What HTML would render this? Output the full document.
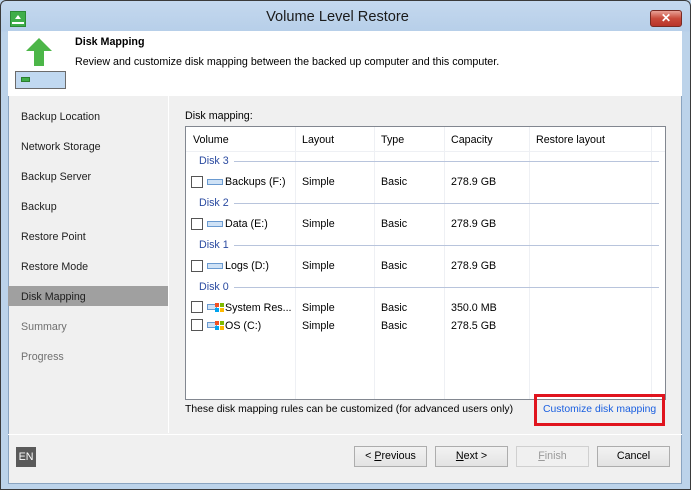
<!DOCTYPE html>
<html><head><style>
*{margin:0;padding:0;box-sizing:border-box}
body{width:691px;height:490px;background:#bcd3ea;font-family:"Liberation Sans",sans-serif;font-size:10.7px;color:#000;position:relative;overflow:hidden}
.abs{position:absolute}
.frame{left:0;top:0;width:691px;height:490px;border:1px solid #3a3a3a;border-radius:6px 6px 0 0;background:linear-gradient(#c4d8ee,#b7cfe9 30px,#bcd3ea 31px)}
.client{left:8px;top:31px;width:674px;height:453px;background:#f0f0f0;border:1px solid #8aa4c0}
.hdr{left:8px;top:31px;width:674px;height:65px;background:#fff}
.nav{left:21px;color:#1e1e1e}
.btn{top:446px;height:21px;border:1px solid #adadad;background:linear-gradient(#f2f2f2,#e3e3e3);text-align:center;line-height:19px}
.th{top:134px}
.disk{color:#2a4aa0}
.line{height:1px;background:#b8c4dc}
.cb{width:12px;height:12px;border:1px solid #555;background:#fff}
</style></head><body>
<div class="abs frame"></div>
<div class="abs" style="left:10px;top:11px;width:16px;height:16px;background:#3fae49;border:1px solid #2c8a35"></div>
<div class="abs" style="left:15px;top:13px;width:6px;height:6px;border-left:3px solid transparent;border-right:3px solid transparent;border-bottom:4px solid #fff"></div>
<div class="abs" style="left:12px;top:22px;width:12px;height:2px;background:#fff"></div>
<div class="abs" style="left:0;top:9px;width:675px;text-align:center;font-size:14.6px;color:#1a1a1a">Volume Level Restore</div>
<div class="abs" style="left:650px;top:10px;width:32px;height:17px;border:1px solid #7a2a22;border-radius:3px;background:linear-gradient(#e8a196,#c94a3a 50%,#b8342a);color:#fff;text-align:center;font-weight:bold;font-size:12px;line-height:15px">✕</div>
<div class="abs client"></div>
<div class="abs hdr"></div>
<svg class="abs" style="left:24px;top:37px" width="30" height="30"><polygon points="15,1 28,14 20,14 20,29 10,29 10,14 2,14" fill="#4cb648"/></svg>
<div class="abs" style="left:15px;top:71px;width:51px;height:18px;border:1px solid #6b6b6b;background:#c0d8f0"></div>
<div class="abs" style="left:21px;top:77px;width:9px;height:5px;background:#3fae49;border:1px solid #2b7e2e"></div>
<div class="abs" style="left:75px;top:36px;font-weight:bold">Disk Mapping</div>
<div class="abs" style="left:75px;top:56px">Review and customize disk mapping between the backed up computer and this computer.</div>
<div class="abs" style="left:168px;top:96px;width:1px;height:337px;background:#fff"></div>
<div class="abs" style="left:8px;top:434px;width:674px;height:1px;background:#fff"></div>
<div class="abs nav" style="top:111px">Backup Location</div>
<div class="abs nav" style="top:141px">Network Storage</div>
<div class="abs nav" style="top:171px">Backup Server</div>
<div class="abs nav" style="top:201px">Backup</div>
<div class="abs nav" style="top:231px">Restore Point</div>
<div class="abs nav" style="top:261px">Restore Mode</div>
<div class="abs" style="left:8px;top:286px;width:160px;height:20px;background:#a0a0a0"></div>
<div class="abs nav" style="top:291px">Disk Mapping</div>
<div class="abs nav" style="top:321px;color:#707070">Summary</div>
<div class="abs nav" style="top:351px;color:#707070">Progress</div>
<div class="abs" style="left:16px;top:447px;width:20px;height:20px;background:#5a5a5a;color:#fff;line-height:20px;text-align:center">EN</div>
<div class="abs" style="left:185px;top:110px">Disk mapping:</div>
<div class="abs" style="left:185px;top:126px;width:481px;height:274px;background:#fff;border:1px solid #828790"></div>
<div class="abs" style="left:295px;top:127px;width:1px;height:272px;background:#eef0f4"></div>
<div class="abs" style="left:374px;top:127px;width:1px;height:272px;background:#eef0f4"></div>
<div class="abs" style="left:444px;top:127px;width:1px;height:272px;background:#eef0f4"></div>
<div class="abs" style="left:529px;top:127px;width:1px;height:272px;background:#eef0f4"></div>
<div class="abs" style="left:651px;top:127px;width:1px;height:272px;background:#eef0f4"></div>
<div class="abs" style="left:186px;top:151px;width:479px;height:1px;background:#eef0f4"></div>
<div class="abs th" style="left:193px">Volume</div>
<div class="abs th" style="left:302px">Layout</div>
<div class="abs th" style="left:381px">Type</div>
<div class="abs th" style="left:451px">Capacity</div>
<div class="abs th" style="left:536px">Restore layout</div>

<div class="abs disk" style="left:199px;top:155px">Disk 3</div><div class="abs line" style="left:234px;top:161px;width:425px"></div>
<div class="abs disk" style="left:199px;top:197px">Disk 2</div><div class="abs line" style="left:234px;top:203px;width:425px"></div>
<div class="abs disk" style="left:199px;top:239px">Disk 1</div><div class="abs line" style="left:234px;top:245px;width:425px"></div>
<div class="abs disk" style="left:199px;top:281px">Disk 0</div><div class="abs line" style="left:234px;top:287px;width:425px"></div>

<div class="abs cb" style="left:191px;top:176px"></div><div class="abs" style="left:207px;top:179px;width:16px;height:6px;border:1px solid #6a9ad0;background:#cfe2f6"></div><div class="abs" style="left:225px;top:176px">Backups (F:)</div>
<div class="abs cb" style="left:191px;top:218px"></div><div class="abs" style="left:207px;top:221px;width:16px;height:6px;border:1px solid #6a9ad0;background:#cfe2f6"></div><div class="abs" style="left:225px;top:218px">Data (E:)</div>
<div class="abs cb" style="left:191px;top:260px"></div><div class="abs" style="left:207px;top:263px;width:16px;height:6px;border:1px solid #6a9ad0;background:#cfe2f6"></div><div class="abs" style="left:225px;top:260px">Logs (D:)</div>
<div class="abs cb" style="left:191px;top:301px"></div><div class="abs" style="left:207px;top:304px;width:10px;height:6px;border:1px solid #6a9ad0;background:#cfe2f6"></div><svg class="abs" style="left:215px;top:303px" width="9" height="9"><rect x="0" y="0" width="4" height="4" fill="#f25022"/><rect x="5" y="0" width="4" height="4" fill="#7fba00"/><rect x="0" y="5" width="4" height="4" fill="#00a4ef"/><rect x="5" y="5" width="4" height="4" fill="#ffb900"/></svg><div class="abs" style="left:225px;top:302px">System Res...</div>
<div class="abs cb" style="left:191px;top:319px"></div><div class="abs" style="left:207px;top:322px;width:10px;height:6px;border:1px solid #6a9ad0;background:#cfe2f6"></div><svg class="abs" style="left:215px;top:321px" width="9" height="9"><rect x="0" y="0" width="4" height="4" fill="#f25022"/><rect x="5" y="0" width="4" height="4" fill="#7fba00"/><rect x="0" y="5" width="4" height="4" fill="#00a4ef"/><rect x="5" y="5" width="4" height="4" fill="#ffb900"/></svg><div class="abs" style="left:225px;top:320px">OS (C:)</div>

<div class="abs" style="left:302px;top:176px">Simple</div><div class="abs" style="left:381px;top:176px">Basic</div><div class="abs" style="left:451px;top:176px">278.9 GB</div>
<div class="abs" style="left:302px;top:218px">Simple</div><div class="abs" style="left:381px;top:218px">Basic</div><div class="abs" style="left:451px;top:218px">278.9 GB</div>
<div class="abs" style="left:302px;top:260px">Simple</div><div class="abs" style="left:381px;top:260px">Basic</div><div class="abs" style="left:451px;top:260px">278.9 GB</div>
<div class="abs" style="left:302px;top:302px">Simple</div><div class="abs" style="left:381px;top:302px">Basic</div><div class="abs" style="left:451px;top:302px">350.0 MB</div>
<div class="abs" style="left:302px;top:320px">Simple</div><div class="abs" style="left:381px;top:320px">Basic</div><div class="abs" style="left:451px;top:320px">278.5 GB</div>

<div class="abs" style="left:185px;top:404px;font-size:10.4px">These disk mapping rules can be customized (for advanced users only)</div>
<div class="abs" style="left:534px;top:394px;width:131px;height:32px;border:3px solid #e0141e"></div>
<div class="abs" style="left:543px;top:404px;color:#1a5fe0;font-size:10.4px">Customize disk mapping</div>

<div class="abs btn" style="left:354px;width:73px">&lt; <u>P</u>revious</div>
<div class="abs btn" style="left:435px;width:73px"><u>N</u>ext &gt;</div>
<div class="abs btn" style="left:516px;width:73px;color:#9a9a9a;border-color:#d0d0d0;background:#f0f0f0"><u>F</u>inish</div>
<div class="abs btn" style="left:597px;width:73px">Cancel</div>
</body></html>
